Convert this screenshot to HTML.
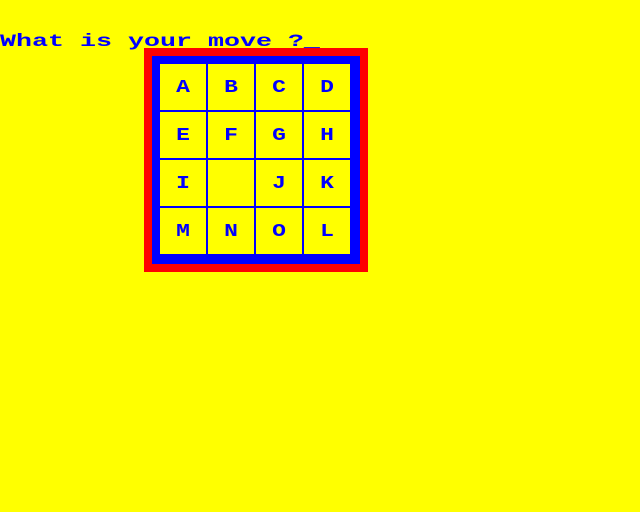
<!DOCTYPE html>
<html><head><style>
body{margin:0;width:640px;height:512px;background:#ff0;overflow:hidden;position:relative;font-family:"Liberation Mono",monospace;font-weight:bold;color:#00f}
.t{position:absolute;left:0;top:32px;font-size:26.67px;line-height:30px;white-space:pre;transform:scaleY(0.66);transform-origin:0 0}
.red{position:absolute;left:144px;top:48px;width:224px;height:224px;background:#f00}
.blue{position:absolute;left:152px;top:56px;width:208px;height:208px;background:#00f}
.c{position:absolute;width:46px;height:46px;background:#ff0;text-align:center;font-size:23px;line-height:47px}
.c span{display:inline-block;transform:scaleY(0.8)}
</style></head><body>
<div class="t">What is your move ?_</div>
<div class="red"></div><div class="blue"></div>
<div id="g"></div>
<script>
var L="ABCDEFGHI JKMNOL",h="";
for(var i=0;i<16;i++){var r=Math.floor(i/4),c=i%4;
h+='<div class="c" style="left:'+(160+c*48)+'px;top:'+(64+r*48)+'px"><span>'+L[i]+'</span></div>';}
document.getElementById('g').innerHTML=h;
</script>
</body></html>
